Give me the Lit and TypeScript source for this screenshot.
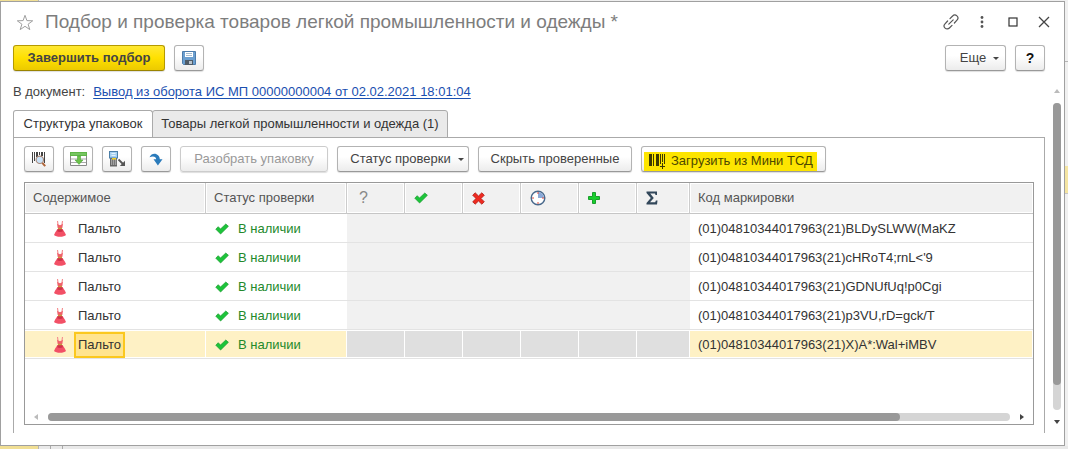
import { LitElement, html, css, svg } from "lit";
import { customElement, state } from "lit/decorators.js";
import { classMap } from "lit/directives/class-map.js";

const icon = (w: number, h: number, body: unknown) => html`<svg
  class="icon" width=${w} height=${h} viewBox="0 0 ${w} ${h}" aria-hidden="true">${body}</svg>`;

const starIcon = icon(18, 17, svg`<path d="M9 1.3 10.9 6.6 16.7 6.8 12.1 10.2 13.8 15.6 9 12.3 4.2 15.6 5.9 10.2 1.3 6.8 7.1 6.6Z" fill="none" stroke="#a0a0a0" stroke-width="1"/>`);

const linkIcon = icon(16, 16, svg`<g fill="none" stroke="#555" stroke-width="1.2" stroke-linecap="round">
  <path d="M7 4.600 9.600 2a2.900 2.900 0 0 1 4.400 4.200L11.400 9"/>
  <path d="M9 11.400 6.400 14a2.900 2.900 0 0 1-4.400-4.200L4.600 7"/>
  <path d="M5.800 10.200 10.200 5.800"/></g>`);

const dotsIcon = icon(4, 12, svg`<g fill="#555"><circle cx="2" cy="1.500" r="1.400"/><circle cx="2" cy="6" r="1.400"/><circle cx="2" cy="10.500" r="1.400"/></g>`);

const squareIcon = icon(10, 10, svg`<rect x="1" y="1" width="8" height="8" fill="none" stroke="#333" stroke-width="1.2"/>`);

const closeIcon = icon(12, 12, svg`<path d="M1 1 11 11M11 1 1 11" stroke="#444" stroke-width="1.3"/>`);

const saveIcon = icon(14, 14, svg`<path d="M.5.5h13v13h-12l-1-1Z" fill="#6b9fd0" stroke="#4d7cab"/>
  <rect x="3" y="1" width="8" height="5" fill="#fff"/><path d="M4 2.5h6M4 4.5h6" stroke="#a5bccf"/>
  <rect x="3" y="9" width="8" height="5" fill="#4f5b66"/><rect x="7" y="10" width="3" height="3" fill="#b9c3cc"/>`);

const scanIcon = icon(16, 16, svg`<path d="M1 1h1v11H1ZM3 1h1v9H3ZM5 1h2v5H5ZM8 1h1v3H8ZM10 1h2v4h-2ZM13 1h1v11h-1Z" fill="#444"/>
  <path d="M14.200 15.200 11.300 11.800" stroke="#b0663a" stroke-width="2"/>
  <circle cx="8.800" cy="8.800" r="3.700" fill="#c9e1f6" stroke="#a88878" stroke-width="1.100"/>`);

const fillIcon = icon(17, 14, svg`<path d="M.5 3.5h16v10H.5Z" fill="#fff" stroke="#888"/>
  <path d="M1 7h15M1 10.5h15" stroke="#aaa"/><rect width="17" height="4" fill="#5fb548"/><path d="M1 2h15" stroke="#8ed47a"/>
  <path d="M7.500 4h3v4H13L9 12.400 5 8h2.500Z" fill="#6cc24a" stroke="#4fa53c" stroke-width=".6"/>`);

const terminalIcon = icon(17, 16, svg`<rect x="1" y="7" width="7" height="8.500" fill="#666"/>
  <path d="M2 9h1.300M4 9h1.300M6 9h1.300M2 11h1.300M4 11h1.300M6 11h1.300M2 13h1.300M4 13h1.300M6 13h1.300" stroke="#ddd" stroke-width="1.200"/>
  <rect x=".5" y=".5" width="8" height="6.500" fill="#a5d0f0" stroke="#4c7fa8"/><path d="M2.500 2.500h4M2.500 4.500h4" stroke="#e3f2fc"/>
  <rect x="3" y="7" width="4" height="1.500" fill="#f2cf22"/>
  <path d="M9.500 8.500 14 13" stroke="#555" stroke-width="1.800"/><path d="M16 9.800V15h-5.200Z" fill="#555"/>`);

const turnIcon = icon(14, 13, svg`<path d="M.5 4.200C2 1 5 .2 7.500 1.200 10 2.200 10.800 4.400 10.800 6.300h2.700L8.900 12.500 4.500 6.300h2.700C7.200 3.600 4.200 2.600.5 4.200Z" fill="#2b7bbb"/>`);

const barcodeAddIcon = icon(17, 16, svg`<path d="M1 1h3v12H1ZM5 1h1v12H5ZM8 1h3v12H8ZM12 1h1v10h-1ZM14 1h1v8h-1ZM16 1h1v10h-1Z" fill="#3d3a00"/>
  <path d="M14.500 10v6M12 13.500h5" stroke="#3d3a00" stroke-width="1"/>`);

const checkIcon = icon(14, 12, svg`<path d="M.8 6.200 3.200 3.700 5.500 6 10.800 1 13.400 3.300 5.600 11Z" fill="#1cc43a" stroke="#1b9a2e" stroke-width=".7"/>`);

const crossIcon = icon(13, 13, svg`<path d="M3.200.8 6.500 4 9.800.8 12.300 3.200 9 6.500 12.300 9.800 9.800 12.200 6.500 9 3.200 12.200.7 9.800 4 6.500.7 3.200Z" fill="#ee2a20" stroke="#b01d17" stroke-width=".8"/>`);

const clockIcon = icon(16, 16, svg`<circle cx="8" cy="8" r="6.800" fill="#fff" stroke="#49698c" stroke-width="1.400"/>
  <path d="M8 8V2a6 6 0 0 1 6 6Z" fill="#8aa9d8"/><path d="M8 2v2M2 8h2M12 8h2M8 12v2" stroke="#e04a3a"/>`);

const plusIcon = icon(12, 12, svg`<path d="M4.500.5h3v4h4v3h-4v4h-3v-4h-4v-3h4Z" fill="#17cf2c" stroke="#1a9e2c"/>`);

const sigmaIcon = icon(12, 14, svg`<path d="M.5.500H11V4H9.500L9 2.600H4.200L7.800 7 4 11.300H9.200L9.900 9.600H11.500L11 13.500H.5V12L4.800 7 .5 2Z" fill="#32475a"/>`);

const dressIcon = icon(12, 16, svg`<path d="M3.500 0 4 3.500M8.500 0 8 3.500" stroke="#f58a8c" stroke-width="1.100" fill="none"/>
  <path d="M3 2.800 4.500 3.600 6 4.200 7.500 3.600 9 2.800 8.300 7H3.700Z" fill="#f0606a"/>
  <path d="M3.500 8H8.500L10.800 11.500 12 14C10 16.400 2 16.400 0 14L1.200 11.500Z" fill="#f25066"/>
  <path d="M3.800 8H8.200L8.900 10.200C7.500 11.200 4.500 11.200 3.100 10.200Z" fill="#cf3148"/>
  <rect x="4" y="6.800" width="4" height="1.400" fill="#c8973d"/>`);

const caret = html`<span class="caret"></span>`;

@customElement("app-root")
export class AppRoot extends LitElement {
  @state() private selected = 4;
  @state() private tab = 0;

  private codes = [
    "(01)04810344017963(21)BLDySLWW(MaKZ",
    "(01)04810344017963(21)cHRoT4;rnL<'9",
    "(01)04810344017963(21)GDNUfUq!p0Cgi",
    "(01)04810344017963(21)p3VU,rD=gck/T",
    "(01)04810344017963(21)X)A*:Wal+iMBV",
  ];

  static styles = css`
    :host {
      display: grid;
      grid-template: 1px 1fr 3px / 1fr 3px;
      min-height: 100vh;
      background: #efefef;
      color: #333;
      font: 13px/16px "Liberation Sans", Arial, sans-serif;
    }
    * { box-sizing: border-box; }
    .icon { display: block; flex: none; }
    button { font: inherit; color: inherit; margin: 0; cursor: pointer; }
    .behind-top { grid-column: 1 / 3; display: flex; }
    .behind-top i, .behind-bottom i { width: 39px; background: #f1df94; border-right: 1px solid #b5b5b5; }
    .behind-bottom { grid-column: 1 / 3; display: flex; background: #e9e9e9; }
    .behind-bottom b { width: 12px; border-right: 1px solid #aaa; }
    .behind-side { display: flex; flex-direction: column; background: #f0f0f0; }
    .behind-side b { height: 61px; border-bottom: 1px solid #b5b5b5; }
    .behind-side i { height: 28px; margin-top: 104px; background: #f5e5a2; border-bottom: 1px solid #c5c5c5; }

    .window {
      display: flex;
      flex-direction: column;
      min-width: 0;
      background: #fff;
      border: 1px solid #a0a0a0;
    }
    .titlebar { display: flex; align-items: center; height: 43px; padding: 0 5px 3px 15px; }
    .titlebar h1 { flex: 1; margin: 0 0 0 11px; font-size: 19px; line-height: 24px; font-weight: 400; color: #7d7d7d; white-space: nowrap; }
    .plain { display: flex; align-items: center; justify-content: center; height: 24px; padding: 0; border: 0; background: none; }
    .titlebar .tool { width: 31px; }

    .btn {
      display: inline-flex;
      align-items: center;
      justify-content: center;
      height: 26px;
      min-width: 30px;
      padding: 0 4px;
      border: 1px solid #b3b3b3;
      border-bottom-color: #999;
      border-radius: 3px;
      background: linear-gradient(#fff 40%, #ececec);
      box-shadow: 0 1px 1px #0002;
      color: #444;
      white-space: nowrap;
    }
    .btn:disabled { color: #999; border-color: #ccc; cursor: default; }
    .primary { width: 152px; font-weight: 700; border-color: #b59a00; border-bottom-color: #9a8300; background: linear-gradient(#ffe833, #ffe000 50%, #ecca00); }
    .caret { margin-left: 7px; border: 3px solid transparent; border-top-color: #444; border-bottom: 0; }
    .commands { display: flex; gap: 9px; padding: 0 19px 0 12px; }
    .spacer { flex: 1; }
    .more { width: 61px; padding-left: 12px; }
    .help { font-weight: 700; color: #111; font-size: 14px; }

    .body { display: flex; flex: 1; padding-left: 12px; }
    .main { display: flex; flex-direction: column; flex: 1; min-width: 0; padding-bottom: 12px; }
    .doc { display: flex; align-items: center; gap: 8px; height: 39px; padding-top: 2px; color: #444; }
    .doc a { color: #1a4fb0; text-underline-offset: 2px; }

    .tabs { display: flex; height: 28px; margin-bottom: -1px; }
    .tab { padding: 0; border: 1px solid #aaa; background: #eaeaea; border-radius: 3px 3px 0 0; white-space: nowrap; }
    .tab + .tab { margin-left: -1px; }
    .tab.on { background: #fff; border-bottom-color: #fff; }
    .tab.first { width: 140px; }
    .tab.second { width: 296px; }
    .panel { display: flex; flex-direction: column; flex: 1; padding: 8px 10px; border: 1px solid #aaa; border-bottom: 0; }
    .toolbar { display: flex; gap: 9px; margin-bottom: 10px; }
    .w-split { width: 148px; }
    .w-status { width: 132px; padding-left: 12px; }
    .w-hide { width: 154px; }
    .w-load { width: 185px; padding: 0 8px 0 2px; justify-content: flex-start; }
    .marker { display: flex; align-items: center; gap: 6px; flex: 1; height: 19px; margin-top: 4px; padding-left: 4px; background: #fde500; color: #4d4800; }

    .grid { display: flex; flex-direction: column; flex: 1; border: 1px solid #999; }
    table { width: 100%; table-layout: fixed; border-collapse: separate; border-spacing: 0; }
    .c-item { width: 181px; }
    .c-status { width: 141px; }
    .c-num { width: 58px; }
    .c-sum { width: 53px; }
    th, td { padding: 0 8px; text-align: left; font-weight: 400; white-space: nowrap; overflow: hidden; }
    th { height: 31px; background: #f1f1f1; color: #555; border-right: 1px solid #ccc; border-bottom: 1px solid #c6c6c6; box-shadow: inset 0 0 0 1px #fff; }
    th:last-child { border-right: 0; }
    th.mark { padding-left: 9px; }
    th.query { padding-left: 12px; font-size: 16px; color: #888; }
    td { height: 29px; padding-top: 1px; border-bottom: 1px solid #e3e3e3; }
    td.num { background: #f1f1f1; }
    tr.sel td { background: #fef1c5; box-shadow: inset -1px 0 #fff, inset 0 1px #fff, inset 0 -1px #fff; }
    tr.sel td.num { background: #dfdfdf; }
    .item { display: flex; align-items: center; height: 26px; padding-left: 21px; }
    .name { display: flex; align-items: center; height: 26px; margin-left: 8px; padding: 0 2px; border: 2px solid transparent; }
    .sel .name { background: #ffe48f; border-color: #fbc81e; }
    .status { display: flex; align-items: center; gap: 9px; padding-left: 1px; color: #23892b; }

    .hscroll { display: flex; align-items: center; gap: 10px; height: 14px; margin-top: auto; padding: 0 9px; }
    .vscroll { display: flex; flex-direction: column; align-items: center; gap: 10px; width: 19px; padding: 18px 2px 21px 7px; }
    .track { flex: 1; display: flex; border-radius: 4px; background: #d5d5d5; }
    .hscroll .track { height: 8px; }
    .vscroll .track { width: 8px; flex-direction: column; }
    .thumb { border-radius: 4px; background: #999; }
    .thumb.h { width: 88.6%; }
    .thumb.v { flex: 0 0 92%; }
    .arrow { border: 3px solid transparent; }
    .left { border-right: 4px solid #bbb; border-left: 0; }
    .right { border-left: 4px solid #444; border-right: 0; }
    .up { border-bottom: 4px solid #bbb; border-top: 0; }
    .down { border-top: 4px solid #444; border-bottom: 0; }
  `;

  private row(code: string, i: number) {
    return html`<tr class=${classMap({ sel: i === this.selected })} @click=${() => (this.selected = i)}>
      <td><div class="item">${dressIcon}<span class="name">Пальто</span></div></td>
      <td><div class="status">${checkIcon}<span>В наличии</span></div></td>
      ${[0, 1, 2, 3, 4, 5].map(() => html`<td class="num"></td>`)}
      <td>${code}</td>
    </tr>`;
  }

  render() {
    return html`
      <div class="behind-top"><i></i></div>
      <section class="window">
        <header class="titlebar">
          <button class="plain" aria-label="Избранное">${starIcon}</button>
          <h1>Подбор и проверка товаров легкой промышленности и одежды *</h1>
          <button class="plain tool" aria-label="Ссылка">${linkIcon}</button>
          <button class="plain tool" aria-label="Меню">${dotsIcon}</button>
          <button class="plain tool" aria-label="Развернуть">${squareIcon}</button>
          <button class="plain tool" aria-label="Закрыть">${closeIcon}</button>
        </header>
        <div class="commands">
          <button class="btn primary">Завершить подбор</button>
          <button class="btn" aria-label="Сохранить">${saveIcon}</button>
          <span class="spacer"></span>
          <button class="btn more">Еще${caret}</button>
          <button class="btn help">?</button>
        </div>
        <div class="body">
          <div class="main">
            <div class="doc"><span>В документ:</span><a href="#">Вывод из оборота ИС МП 00000000004 от 02.02.2021 18:01:04</a></div>
            <div class="tabs" role="tablist">
              ${["Структура упаковок", "Товары легкой промышленности и одежда (1)"].map(
                (t, i) => html`<button role="tab" aria-selected=${this.tab === i}
                  class=${classMap({ tab: true, first: i === 0, second: i === 1, on: this.tab === i })}
                  @click=${() => (this.tab = i)}>${t}</button>`
              )}
            </div>
            <div class="panel" role="tabpanel">
              <div class="toolbar">
                <button class="btn" aria-label="Поиск по штрихкоду">${scanIcon}</button>
                <button class="btn" aria-label="Заполнить">${fillIcon}</button>
                <button class="btn" aria-label="Загрузить из ТСД">${terminalIcon}</button>
                <button class="btn" aria-label="Перейти">${turnIcon}</button>
                <button class="btn w-split" disabled>Разобрать упаковку</button>
                <button class="btn w-status">Статус проверки${caret}</button>
                <button class="btn w-hide">Скрыть проверенные</button>
                <button class="btn w-load"><span class="marker">${barcodeAddIcon}<span>Загрузить из Мини ТСД</span></span></button>
              </div>
              <div class="grid">
                <table>
                  <colgroup>
                    <col class="c-item"><col class="c-status">
                    <col class="c-num"><col class="c-num"><col class="c-num"><col class="c-num"><col class="c-num">
                    <col class="c-sum"><col>
                  </colgroup>
                  <thead><tr>
                    <th>Содержимое</th><th>Статус проверки</th>
                    <th class="query">?</th>
                    ${[checkIcon, crossIcon, clockIcon, plusIcon, sigmaIcon].map((g) => html`<th class="mark">${g}</th>`)}
                    <th>Код маркировки</th>
                  </tr></thead>
                  <tbody>${this.codes.map((c, i) => this.row(c, i))}</tbody>
                </table>
                <div class="hscroll"><span class="arrow left"></span><div class="track"><div class="thumb h"></div></div><span class="arrow right"></span></div>
              </div>
            </div>
          </div>
          <div class="vscroll"><span class="arrow up"></span><div class="track"><div class="thumb v"></div></div><span class="arrow down"></span></div>
        </div>
      </section>
      <div class="behind-side"><b></b><i></i></div>
      <div class="behind-bottom"><i></i><b></b><b></b></div>
    `;
  }
}
